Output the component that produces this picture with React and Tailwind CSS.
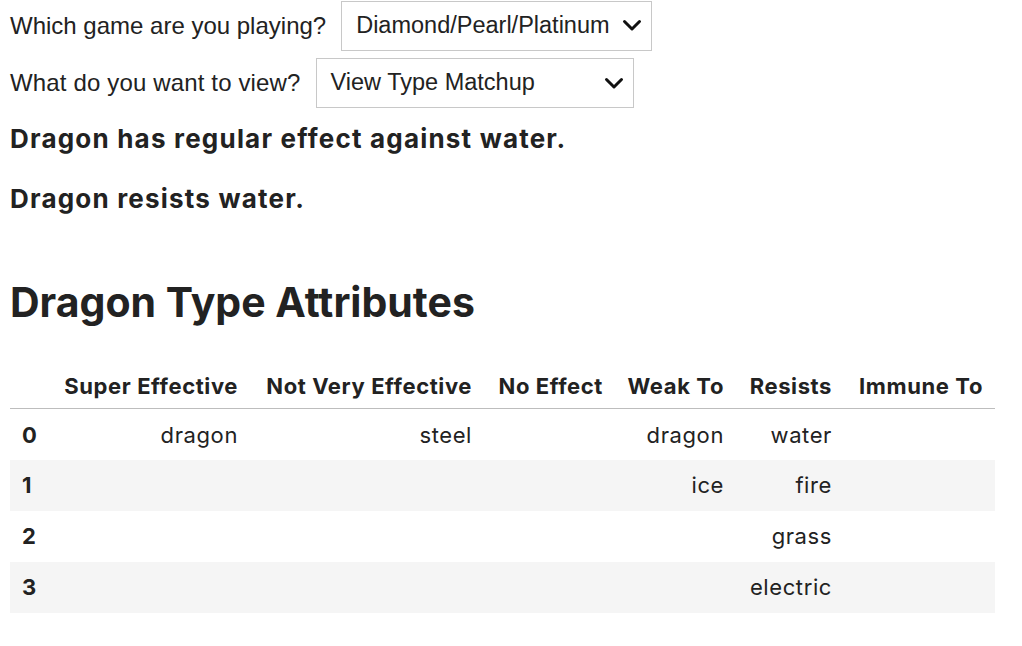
import React from "react";

const Chevron = () => (
  <svg width="20" height="13" viewBox="0 0 20 13" className="shrink-0">
    <path d="M2.5 2.5 L10 10 L17.5 2.5" fill="none" stroke="#111" strokeWidth="3" strokeLinecap="round" strokeLinejoin="round" />
  </svg>
);

const cols = [
  { h: "Super Effective", w: "w-[201px]" },
  { h: "Not Very Effective", w: "w-[234px]" },
  { h: "No Effect", w: "w-[131px]" },
  { h: "Weak To", w: "w-[121px]" },
  { h: "Resists", w: "w-[108px]" },
  { h: "Immune To", w: "w-[151px]" },
];

const rows = [
  ["dragon", "steel", "", "dragon", "water", ""],
  ["", "", "", "ice", "fire", ""],
  ["", "", "", "", "grass", ""],
  ["", "", "", "", "electric", ""],
];

export default function App() {
  return (
    <div className="bg-white text-[#222] min-h-[646px] px-[10px]">
      <div className="flex items-center h-[51px] font-['Liberation_Sans',Arial,sans-serif] text-[24px]">
        <span className="mr-[15px]">Which game are you playing?</span>
        <div className="flex items-center justify-between w-[311px] h-[50px] border border-[#c8c8c8] pl-[14px] pr-[9px] text-[23.5px]">
          <span>Diamond/Pearl/Platinum</span>
          <Chevron />
        </div>
      </div>
      <div className="flex items-center mt-[7px] h-[50px] font-['Liberation_Sans',Arial,sans-serif] text-[24px]">
        <span className="mr-[15px] tracking-[0.15px]">What do you want to view?</span>
        <div className="flex items-center justify-between w-[318px] h-[50px] border border-[#c8c8c8] pl-[14px] pr-[9px] text-[23.5px]">
          <span>View Type Matchup</span>
          <Chevron />
        </div>
      </div>
      <div className="font-['Inter',sans-serif]">
        <p className="font-bold text-[26px] tracking-[1.2px] leading-[30px] mt-[16px]">Dragon has regular effect against water.</p>
        <p className="font-bold text-[26px] tracking-[1.2px] leading-[30px] mt-[30px]">Dragon resists water.</p>
        <h1 className="font-bold text-[41px] leading-[48px] mt-[64px]">Dragon Type Attributes</h1>
        <table className="mt-[34px] w-[985px] table-fixed border-collapse text-[22px] tracking-[0.6px]">
          <thead>
            <tr className="border-b border-[#bdbdbd]">
              <th className="w-[39px]"></th>
              {cols.map((c) => (
                <th key={c.h} className={`${c.w} whitespace-nowrap text-right font-bold px-[12px] h-[48px] pt-[6px]`}>
                  {c.h}
                </th>
              ))}
            </tr>
          </thead>
          <tbody>
            {rows.map((r, i) => (
              <tr key={i} className={i % 2 === 1 ? "bg-[#f5f5f5]" : ""}>
                <td className={`text-left font-bold pl-[12px] ${i === 0 ? "h-[52px] pt-[2px]" : "h-[51px]"}`}>{i}</td>
                {r.map((v, j) => (
                  <td key={j} className={`whitespace-nowrap text-right px-[12px] ${i === 0 ? "pt-[2px]" : ""}`}>{v}</td>
                ))}
              </tr>
            ))}
          </tbody>
        </table>
      </div>
    </div>
  );
}
